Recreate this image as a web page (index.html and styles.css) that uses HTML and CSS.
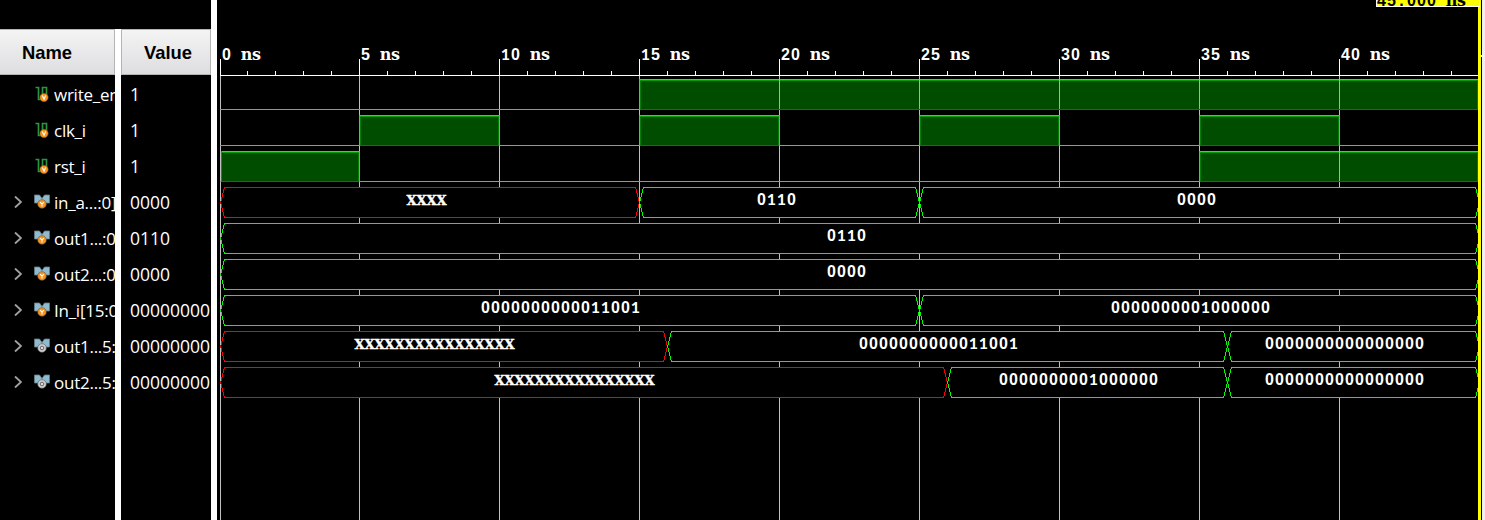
FILE: index.html
```html
<!DOCTYPE html>
<html lang="en">
<head>
<meta charset="utf-8">
<title>Waveform</title>
<link rel="stylesheet" href="styles.css">
</head>
<body>
<svg class="defs" width="0" height="0" aria-hidden="true">
  <symbol id="chevron" viewBox="0 0 8 12"><path d="M1 .5l6 5.5-6 5.5" fill="none" stroke="#a0a0a0" stroke-width="1.9"/></symbol>
  <symbol id="wire" viewBox="0 0 16 16">
    <path d="M1.5 1.5h3v12h4v-12h4v8" fill="none" stroke="#2a9440" stroke-width="1.7"/>
    <circle cx="10" cy="11.5" r="4.2" fill="#f7931e" stroke="#6b4a20" stroke-width=".5"/>
    <path d="M8.3 9.6l1.7 3.7 1.7-3.7" fill="none" stroke="#fff" stroke-width="1.1"/>
  </symbol>
  <symbol id="bus" viewBox="0 0 16 16">
    <path d="M.5 1h5l2.5 3.5 2.5-3.5h5v8h-15z" fill="#8fbbd0" stroke="#697b85" stroke-width=".8"/>
    <circle cx="8" cy="10" r="4.3" fill="#f7931e" stroke="#6b5030" stroke-width=".6"/>
    <path d="M6.2 8L8 10.3 9.8 8M8 10.3V12.5" fill="none" stroke="#fff" stroke-width="1.1"/>
  </symbol>
  <symbol id="reg" viewBox="0 0 16 16">
    <path d="M.5 1h5l2.5 3.5 2.5-3.5h5v8h-15z" fill="#8fbbd0" stroke="#697b85" stroke-width=".8"/>
    <circle cx="8" cy="10" r="4.3" fill="#d0d0d0" stroke="#555" stroke-width=".6"/>
    <circle cx="8" cy="10" r="1.8" fill="#ddd" stroke="#666" stroke-width="1"/>
  </symbol>
</svg>
<main class="viewer">
  <section class="column names">
    <h2 class="head">Name</h2>
    <div class="row"><i class="arrow"></i><svg class="icon"><use href="#wire"/></svg><span>write_en</span></div>
    <div class="row"><i class="arrow"></i><svg class="icon"><use href="#wire"/></svg><span>clk_i</span></div>
    <div class="row"><i class="arrow"></i><svg class="icon"><use href="#wire"/></svg><span>rst_i</span></div>
    <div class="row"><svg class="arrow"><use href="#chevron"/></svg><svg class="icon"><use href="#bus"/></svg><span>in_a...:0]</span></div>
    <div class="row"><svg class="arrow"><use href="#chevron"/></svg><svg class="icon"><use href="#bus"/></svg><span>out1...:0</span></div>
    <div class="row"><svg class="arrow"><use href="#chevron"/></svg><svg class="icon"><use href="#bus"/></svg><span>out2...:0</span></div>
    <div class="row"><svg class="arrow"><use href="#chevron"/></svg><svg class="icon"><use href="#bus"/></svg><span>In_i[15:0</span></div>
    <div class="row"><svg class="arrow"><use href="#chevron"/></svg><svg class="icon"><use href="#reg"/></svg><span>out1...5:</span></div>
    <div class="row"><svg class="arrow"><use href="#chevron"/></svg><svg class="icon"><use href="#reg"/></svg><span>out2...5:</span></div>
  </section>
  <div class="divider short"></div>
  <section class="column values">
    <h2 class="head">Value</h2>
    <div class="row">1</div><div class="row">1</div><div class="row">1</div>
    <div class="row">0000</div><div class="row">0110</div><div class="row">0000</div>
    <div class="row">00000000</div><div class="row">00000000</div><div class="row">00000000</div>
  </section>
  <div class="divider"></div>
  <svg class="waves" id="waves" width="1268" height="520" viewBox="217 0 1268 520"></svg>
</main>
<script src="waves.js"></script>
</body>
</html>
```
FILE: styles.css
```css
body { margin: 0; background: #000; overflow: hidden; }
.defs { position: absolute; }
.viewer { display: flex; width: 1485px; height: 520px; overflow: hidden; }
.column { box-sizing: border-box; padding-top: 29px; overflow: hidden; flex: none; color: #fff; font: 17.5px "Open Sans", sans-serif; }
.names { width: 115px; font-size: 17px; letter-spacing: -.25px; }
.values { width: 90px; }
.head { box-sizing: border-box; height: 46px; margin: 0 0 1px; border: 1px solid #b4b4b4; background: linear-gradient(#f4f4f4, #dedee1); color: #000; font: bold 18.4px/46px "Liberation Sans", sans-serif; letter-spacing: 0; }
.names .head { border-left: 0; padding-left: 22px; }
.values .head { padding-left: 22px; }
.row { display: flex; align-items: center; height: 36px; white-space: nowrap; }
.names .row { padding-left: 14px; }
.values .row { padding-left: 9px; }
.arrow { flex: none; width: 8px; height: 12px; margin: 0 12px 1px 0; }
.icon { flex: none; width: 16px; height: 16px; margin: 0 4px 0 0; }
.divider { flex: none; width: 6px; background: #fff; }
.short { margin-top: 29px; }
.waves { display: block; flex: none; shape-rendering: crispEdges; }
.tick { fill: #fff; }
.grid { fill: #c0c0c0; }
.level { fill: #0f0; }
.high { fill: #004d00; stroke: #008000; }
.high-shade { fill: #00a000; }
.grid-over { fill: #88c888; }
.bus { fill: #000; stroke: #0f0; }
.unknown { stroke: #f00; }
.digits { fill: #fff; font: bold 16px "Liberation Sans", sans-serif; }
.one { font-family: Lato, sans-serif; }
.slab { fill: #fff; font: bold 16px "DejaVu Serif", serif; }
.cross { fill: #fff; stroke: #fff; stroke-width: .4px; font: bold 13px "DejaVu Serif", serif; }
.cursor { fill: #ff0; }
.edge { fill: #f0f0f0; }
.cursor-text { fill: #000; }
```
FILE: waves.js
```js
const svg = document.getElementById('waves');

function el(name, attrs, text) {
  const node = document.createElementNS('http://www.w3.org/2000/svg', name);
  for (const key in attrs) node.setAttribute(key, attrs[key]);
  if (text !== undefined) node.textContent = text;
  svg.appendChild(node);
  return node;
}
const rect = (x, y, width, height, cls) => el('rect', { x, y, width, height, class: cls });

// Every glyph is centred in a 10px cell; the digit 1 takes a face with a foot serif.
function cells(text, x, y, cls) {
  const xs = [...text].map((c, i) => x + i * 10 + 4.5).join(' ');
  const node = el('text', { x: xs, y, class: cls, 'text-anchor': 'middle' });
  (text.match(/1+|[^1]+/g) || []).forEach(run => {
    const span = document.createElementNS('http://www.w3.org/2000/svg', 'tspan');
    if (run[0] === '1') span.setAttribute('class', 'one');
    span.textContent = run;
    node.appendChild(span);
  });
}

const majors = [220, 359, 499, 639, 779, 919, 1059, 1199, 1339];

rect(220, 75, 1258, 1, 'tick');
majors.forEach((x, i) => {
  rect(x, 76, 1, 444, 'grid');
  rect(x, 59, 1, 17, 'tick');
  for (let n = 1; n < 5; n++) rect(219 + i * 140 + n * 28, 71, 1, 4, 'tick');
  const label = String(i * 5);
  cells(label, x + 2, 60, 'digits');
  cells('ns', x + 2 + (label.length + 1) * 10, 60, 'slab');
});

// Single-bit signals: spans where the level is high.
const bits = [[[639, 1478]], [[359, 499], [639, 779], [919, 1059], [1199, 1339]], [[220, 359], [1199, 1478]]];
bits.forEach((spans, row) => {
  const y = 79 + row * 36;
  rect(220, y + 30, 1258, 1, 'level');
  spans.forEach(([a, b]) => {
    el('rect', { x: a + 1.5, y: y + .5, width: b - a - 2, height: 30, class: 'high' });
    rect(a + 1, y, b - a - 1, 1, 'level');
    rect(a + 1, y + 1, b - a - 1, 1, 'high-shade');
    if (a === 220) rect(221, y, 1, 31, 'high-shade');
    else rect(a, y, 1, 31, 'level');
    if (b < 1478) rect(b, y, 1, 31, 'level');
    majors.filter(x => x > a && x < b).forEach(x => rect(x, y, 1, 30, 'grid-over'));
  });
});

// Buses: start, end, value, text start, unknown flag.
const buses = [
  [[220, 639, 'XXXX', 407, 1], [639, 919, '0110', 757], [919, 1479, '0000', 1177]],
  [[220, 1479, '0110', 827]],
  [[220, 1479, '0000', 827]],
  [[220, 919, '0000000000011001', 481], [919, 1479, '0000000001000000', 1111]],
  [[220, 667, 'XXXXXXXXXXXXXXXX', 355, 1], [667, 1227, '0000000000011001', 859], [1227, 1479, '0000000000000000', 1265]],
  [[220, 947, 'XXXXXXXXXXXXXXXX', 495, 1], [947, 1227, '0000000001000000', 999], [1227, 1479, '0000000000000000', 1265]]
];
buses.forEach((spans, row) => {
  const y = 187.5 + row * 36;
  spans.forEach(([a, b, value, tx, unknown]) => {
    const l = a + .5, r = b + .5;
    el('path', {
      d: `M${l} ${y + 15}L${l + 4} ${y}H${r - 4}L${r} ${y + 15}L${r - 4} ${y + 30}H${l + 4}Z`,
      class: unknown ? 'bus unknown' : 'bus'
    });
    cells(value, tx, y + 17.5, unknown ? 'cross' : 'digits');
  });
});

rect(1478, 0, 3, 520, 'cursor');
rect(1376, 0, 104, 7, 'tick');
rect(1377, 0, 102, 6, 'cursor');
cells('45.000', 1377, 6, 'digits cursor-text');
cells('ns', 1447, 6, 'slab cursor-text');
rect(1482, 0, 3, 520, 'edge');
rect(1481, 55, 1, 2, 'tick');
```
